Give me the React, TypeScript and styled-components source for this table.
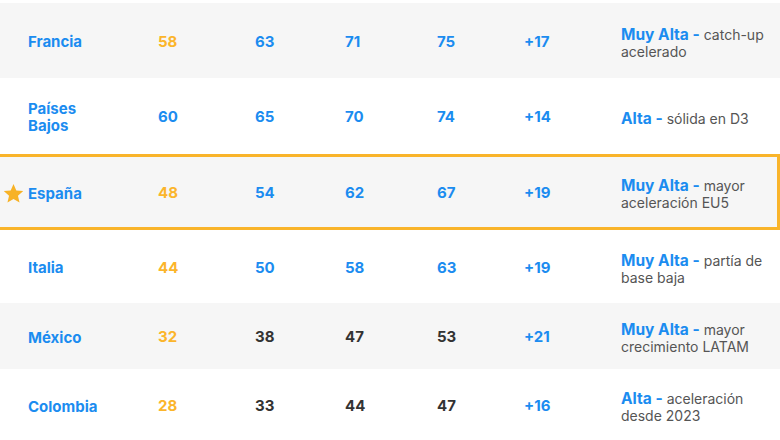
import React from "react";
import styled, { createGlobalStyle } from "styled-components";

const GlobalStyle = createGlobalStyle`
    html, body {
        margin: 0;
        padding: 0;
        background: #ffffff;
    }
    body {
        font-family: Inter, "Open Sans", sans-serif;
        width: 780px;
        height: 440px;
        overflow: hidden;
    }
`;

type Tone = "low" | "mid" | "dark";

type Country = {
    name: string;
    values: number[];
    tones: Tone[];
    delta: string;
    level: string;
    note: string;
    height: number;
    shaded?: boolean;
    featured?: boolean;
};

const rows: Country[] = [
    { name: "Francia", values: [58, 63, 71, 75], tones: ["low", "mid", "mid", "mid"], delta: "+17", level: "Muy Alta", note: "catch-up acelerado", height: 75, shaded: true },
    { name: "Países Bajos", values: [60, 65, 70, 74], tones: ["mid", "mid", "mid", "mid"], delta: "+14", level: "Alta", note: "sólida en D3", height: 76 },
    { name: "España", values: [48, 54, 62, 67], tones: ["low", "mid", "mid", "mid"], delta: "+19", level: "Muy Alta", note: "mayor aceleración EU5", height: 76, shaded: true, featured: true },
    { name: "Italia", values: [44, 50, 58, 63], tones: ["low", "mid", "mid", "mid"], delta: "+19", level: "Muy Alta", note: "partía de base baja", height: 73 },
    { name: "México", values: [32, 38, 47, 53], tones: ["low", "dark", "dark", "dark"], delta: "+21", level: "Muy Alta", note: "mayor crecimiento LATAM", height: 66, shaded: true },
    { name: "Colombia", values: [28, 33, 44, 47], tones: ["low", "dark", "dark", "dark"], delta: "+16", level: "Alta", note: "aceleración desde 2023", height: 72 },
];

const toneColor: Record<Tone, string> = {
    low: "#fbb52b",
    mid: "#1b8cf0",
    dark: "#333333",
};

function Star() {
    return (
        <StarIcon viewBox="0 0 24 24" aria-hidden>
            <path d="M12 1.2l3.2 7.3 7.9.7-6 5.3 1.8 7.8L12 18.2 5.1 22.3l1.8-7.8-6-5.3 7.9-.7z" fill="#f7b226" />
        </StarIcon>
    );
}

export default function App() {
    return (
        <>
            <GlobalStyle />
            <Table>
                {rows.map((r) => (
                    <Row key={r.name} $height={r.height} $shaded={!!r.shaded} $featured={!!r.featured}>
                        <NameCell>
                            {r.featured && <Star />}
                            <Name>{r.name}</Name>
                        </NameCell>
                        {r.values.map((v, i) => (
                            <Value key={i} $tone={r.tones[i]}>{v}</Value>
                        ))}
                        <Value $tone="mid">{r.delta}</Value>
                        <Note>
                            <Level>{r.level} -</Level> {r.note}
                        </Note>
                    </Row>
                ))}
            </Table>
        </>
    );
}

const Table = styled.div`
    padding-top: 3px;
    width: 780px;
`;

const Row = styled.div<{ $height: number; $shaded: boolean; $featured: boolean }>`
    display: grid;
    grid-template-columns: 158px 97px 90px 92px 87px 97px 1fr;
    align-items: center;
    box-sizing: border-box;
    height: ${(p) => p.$height}px;
    width: 780px;
    padding-top: 2px;
    background: ${(p) => (p.$shaded ? "#f6f6f6" : "#ffffff")};
    border-top: ${(p) => (p.$featured ? "3px solid #f9b42a" : "0")};
    border-bottom: ${(p) => (p.$featured ? "3px solid #f9b42a" : "0")};
    border-right: ${(p) => (p.$featured ? "3px solid #f9b42a" : "0")};
`;

const NameCell = styled.div`
    display: flex;
    align-items: center;
    padding-left: 28px;
`;

const StarIcon = styled.svg`
    width: 21px;
    height: 21px;
    margin-left: -25px;
    margin-right: 4px;
    flex: none;
`;

const Name = styled.span`
    max-width: 80px;
    color: #1b8cf0;
    font-size: 15px;
    font-weight: 700;
    line-height: 17px;
`;

const Value = styled.div<{ $tone: Tone }>`
    color: ${(p) => toneColor[p.$tone]};
    font-size: 15px;
    font-weight: 700;
    line-height: 18px;
`;

const Note = styled.div`
    color: #555555;
    font-size: 14px;
    line-height: 17px;
    padding-right: 8px;
    padding-top: 2px;
`;

const Level = styled.span`
    color: #1b8cf0;
    font-size: 15.5px;
    font-weight: 700;
    line-height: 16px;
`;
